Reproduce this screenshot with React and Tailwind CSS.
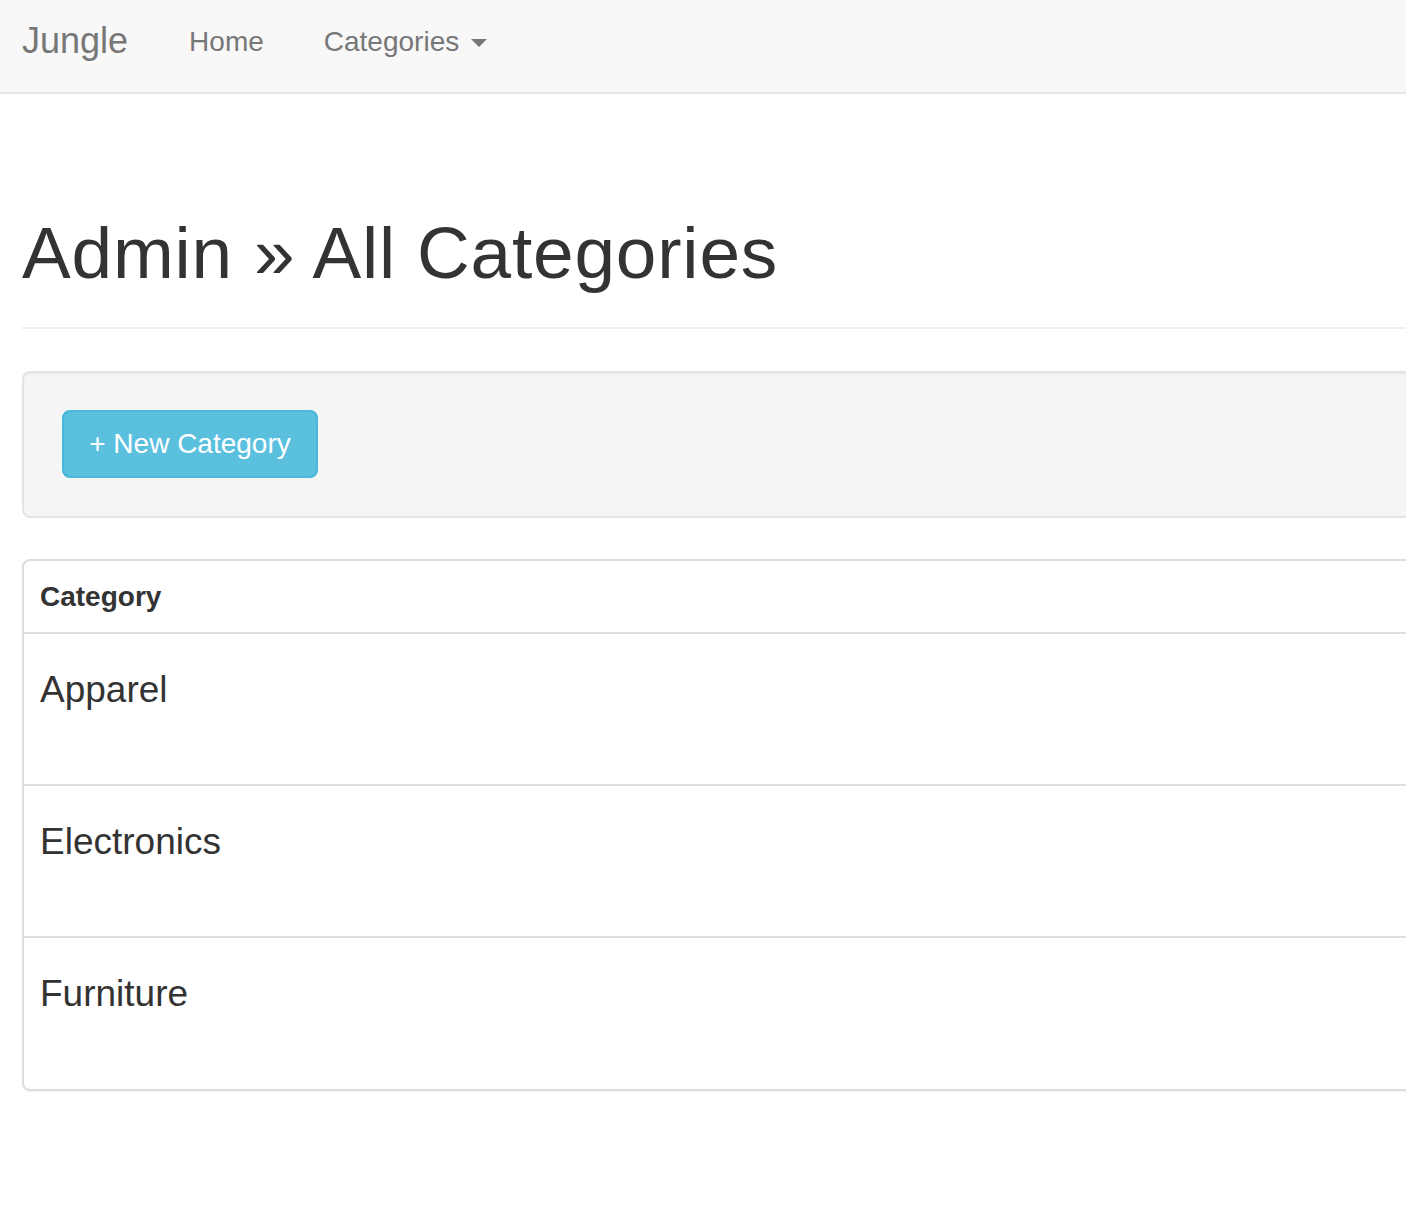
const categories = ["Apparel", "Electronics", "Furniture"];

function Navbar() {
  return (
    <nav className="h-[94px] w-full bg-[#f8f8f8] border-b-2 border-[#e7e7e7]">
      <div className="flex items-start pl-[22px] pt-[22px]">
        <a href="#" className="text-[36px] leading-[40px] text-[#777] -mt-[1px]">
          Jungle
        </a>
        <a href="#" className="ml-[61px] text-[28px] leading-[40px] text-[#777]">
          Home
        </a>
        <a href="#" className="ml-[60px] flex items-center text-[28px] leading-[40px] text-[#777]">
          Categories
          <span className="ml-[12px] mt-[2px] w-0 h-0 border-l-[8px] border-r-[8px] border-t-[8px] border-l-transparent border-r-transparent border-t-[#777]" />
        </a>
      </div>
    </nav>
  );
}

export default function App() {
  return (
    <div className="min-h-screen w-full overflow-hidden bg-white text-[#333] font-['Liberation_Sans',Arial,sans-serif]">
      <Navbar />
      <main className="w-[1500px] pl-[22px]">
        <div className="mt-[119px] border-b-2 border-[#eee] pb-[35px]">
          <h1 className="text-[73px] leading-[79px] tracking-[0.8px] font-normal text-[#333]">
            Admin » All Categories
          </h1>
        </div>

        <div className="mt-[42px] h-[147px] rounded-[8px] border-2 border-[#e3e3e3] bg-[#f5f5f5] shadow-[inset_0_1px_1px_rgba(0,0,0,0.05)] pt-[37px] pl-[38px]">
          <button className="h-[68px] w-[256px] rounded-[8px] border-2 border-[#46b8da] bg-[#5bc0de] text-white text-[28px] leading-[40px]">
            + New Category
          </button>
        </div>

        <div className="mt-[41px] rounded-[8px] border-2 border-[#ddd] bg-white shadow-[0_1px_2px_rgba(0,0,0,0.05)]">
          <table className="w-full border-collapse">
            <thead>
              <tr className="border-b-2 border-[#ddd]">
                <th className="h-[72px] px-[16px] text-left align-middle text-[28px] leading-[40px] font-bold">
                  Category
                </th>
              </tr>
            </thead>
            <tbody>
              {categories.map((name, i) => (
                <tr key={name} className={i < categories.length - 1 ? "border-b-2 border-[#ddd]" : ""}>
                  <td className="h-[152px] px-[16px] align-top">
                    <h4 className="mt-[36px] text-[37px] leading-[40px] font-normal">{name}</h4>
                  </td>
                </tr>
              ))}
            </tbody>
          </table>
        </div>
      </main>
    </div>
  );
}
